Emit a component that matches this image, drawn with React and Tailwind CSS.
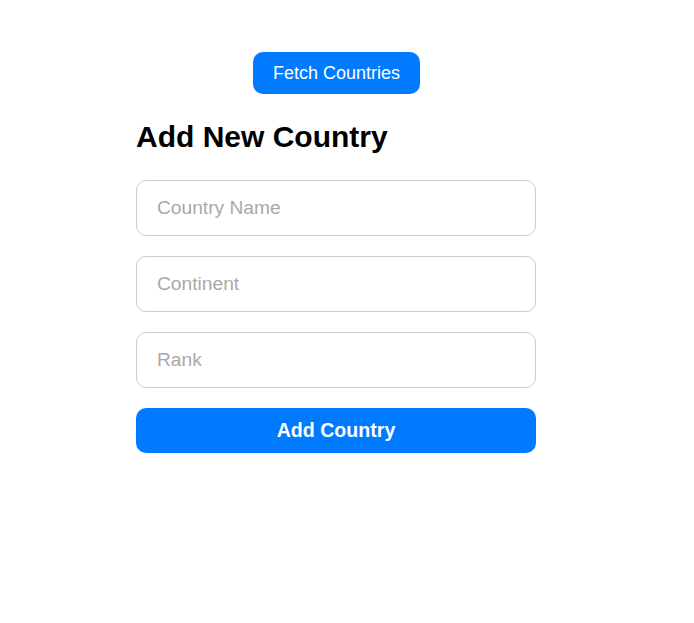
import { useState } from 'react';

function App() {
  const [form, setForm] = useState({ name: '', continent: '', rank: '' });

  const update = (key) => (e) => setForm({ ...form, [key]: e.target.value });

  return (
    <div className="min-h-[623px] bg-white font-['Liberation_Sans',Arial,sans-serif]">
      <div className="flex w-[673px] flex-col items-center pt-[52px]">
        <button
          type="button"
          className="h-[42px] rounded-[10px] bg-[#007bff] px-[20px] text-[18px] leading-[22px] text-white"
        >
          Fetch Countries
        </button>

        <div className="mt-[26px] mr-px flex w-[400px] flex-col">
          <h2 className="h-[34px] text-[30px] font-bold leading-[34px] text-black">Add New Country</h2>
          <div className="mt-[26px] flex flex-col gap-[20px]">
            <input
              value={form.name}
              onChange={update('name')}
              placeholder="Country Name"
              className="h-[56px] w-full rounded-[10px] border border-[#cccccc] px-[20px] text-[19.2px] text-black outline-none placeholder:text-[#a9a9a9]"
            />
            <input
              value={form.continent}
              onChange={update('continent')}
              placeholder="Continent"
              className="h-[56px] w-full rounded-[10px] border border-[#cccccc] px-[20px] text-[19.2px] text-black outline-none placeholder:text-[#a9a9a9]"
            />
            <input
              value={form.rank}
              onChange={update('rank')}
              placeholder="Rank"
              className="h-[56px] w-full rounded-[10px] border border-[#cccccc] px-[20px] text-[19.2px] text-black outline-none placeholder:text-[#a9a9a9]"
            />
            <button
              type="button"
              className="h-[45px] w-full rounded-[10px] bg-[#007bff] text-[19.6px] font-bold text-white"
            >
              Add Country
            </button>
          </div>
        </div>
      </div>
    </div>
  );
}

export default App;
